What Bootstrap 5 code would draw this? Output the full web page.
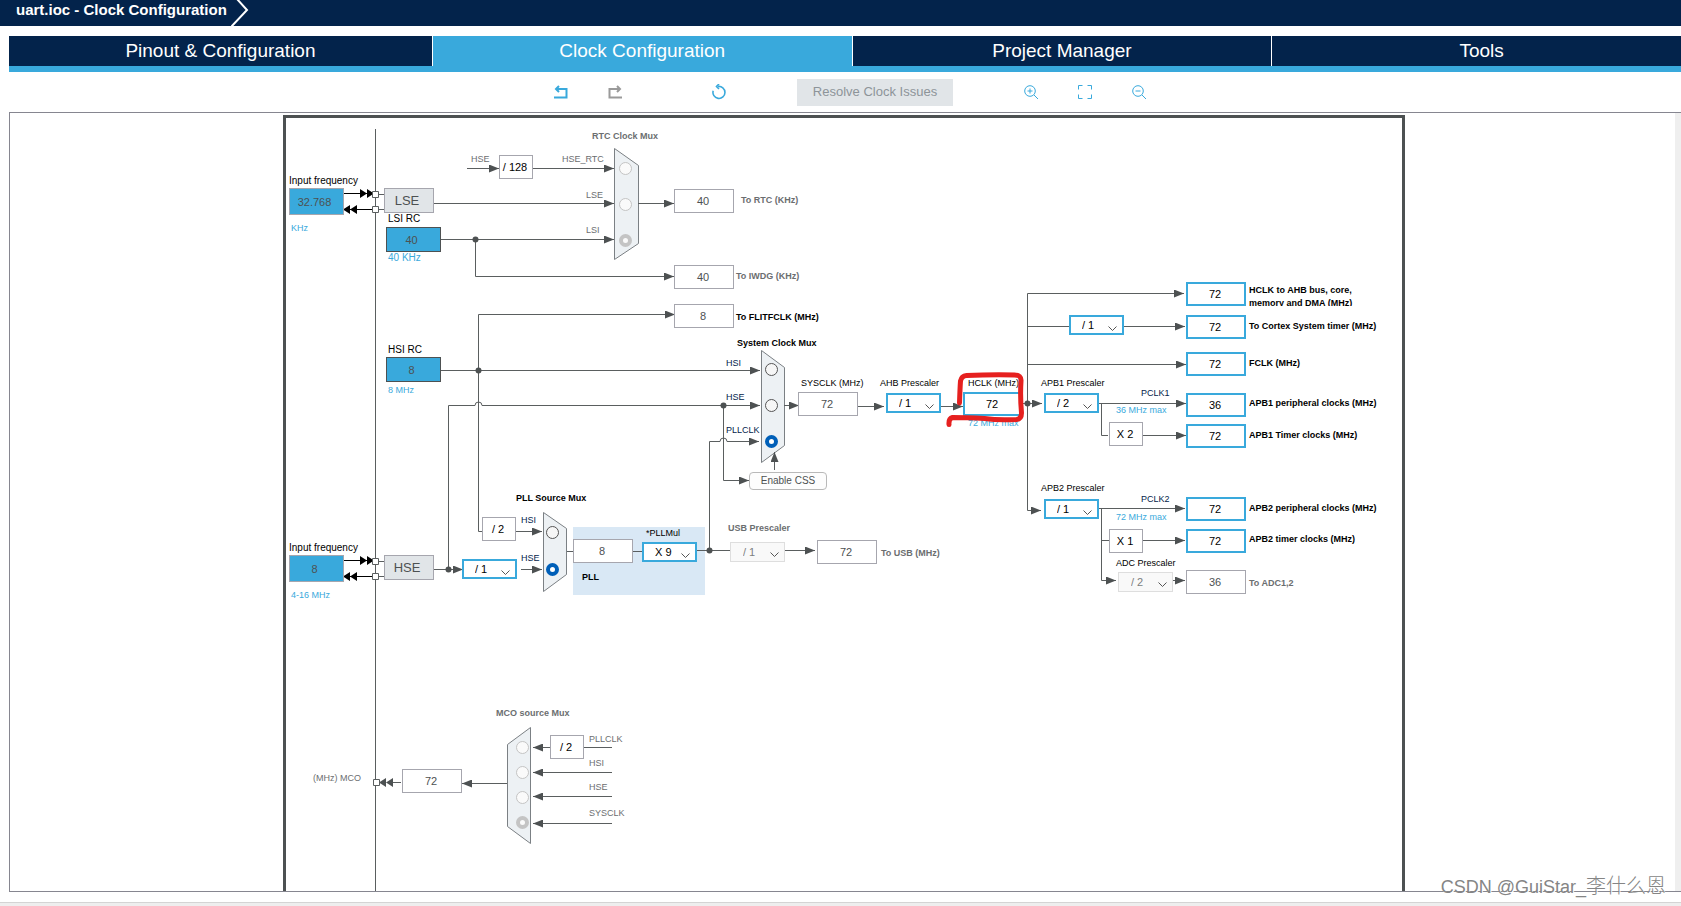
<!DOCTYPE html>
<html lang="en">
<head>
<meta charset="utf-8">
<meta name="viewport" content="width=device-width, initial-scale=1">
<title>uart.ioc - Clock Configuration</title>
<link rel="stylesheet" href="https://cdn.jsdelivr.net/npm/bootstrap@5.3.0/dist/css/bootstrap.min.css">
<style>
:root{--navy:#03234b;--sky:#39a9dc;--wire:#4d5152;--edge:#a6a6ae}
body{font-family:"Liberation Sans",Arial,sans-serif;color:#000;background:#fff;overflow-x:hidden}
.titlebar{background:var(--navy);height:26px}
.titlebar h1{font-size:15px;line-height:20px;font-weight:700}
.tab-row{padding-top:10px}
.main-tabs{margin-left:9px;margin-right:-10px;border-bottom:6px solid var(--sky);gap:1px}
.main-tabs .nav-item{flex:1 1 0}
.main-tabs .nav-item:first-child{flex-grow:1.01}
.main-tabs .nav-link{background:var(--navy);color:#fff;font-size:19px;line-height:30px;padding:0;border-radius:0;text-align:center}
.main-tabs .nav-link.active{background:var(--sky);color:#fff}
.tools{height:40px;padding-left:19px}
.icon-btn{width:14px;height:16px;color:var(--sky);background:none;border:0;padding:0;display:flex;align-items:center}
.icon-btn:disabled{color:#9a9a9a}
.gap-a{margin-right:40px}.gap-b{margin-right:90px}.gap-c{margin-right:71px}
.resolve,.resolve:disabled{background:#e1e5e8;color:#8d9499;border:0;border-radius:0;width:156px;height:27px;padding:0;font-size:13px;opacity:1}
.canvas{margin-left:9px;border:1px solid #868690;border-right:0;padding:2px 0 0 3px}
.scrollstrip{width:6px;background:#efefef;margin-top:-2px}
.stage{width:1122px;min-height:776px;border:3px solid var(--wire);border-bottom:0;flex:none}
.stage svg{position:absolute;left:-3px;top:-3px;overflow:visible;pointer-events:none}
.sheet{position:absolute;left:-3px;top:-3px}
.sheet>*{position:absolute}
.cap{font-size:9px;line-height:12px;white-space:nowrap;color:#000}
.cap.big{font-size:10px}
.cap.strong{font-weight:700}
.cap.dim{color:#6b6e70}
.cap.blue{color:var(--sky)}
.cap.navy{color:#03234b}
.cap.wrap2{line-height:13px;width:125px;height:22px;overflow:hidden;white-space:normal}
.sheet .form-control,.sheet .form-select,.factor{border-radius:0;padding:0;font-size:11px;line-height:12px;min-height:0;box-shadow:none}
.sheet .form-control{width:60px;height:24px;text-align:center;padding-right:2px;border:1px solid var(--edge);color:var(--wire);background:#fff}
.sheet .form-control.hot{border:2px solid var(--sky);color:#000}
.sheet .form-control.source{width:55px;height:25px;padding-right:4px;background:var(--sky);border-color:var(--wire)}
.sheet .form-control.osc{width:55px;height:27px;padding-right:4px;background:var(--sky)}
.sheet .form-select{width:55px;height:20px;border:2px solid var(--sky);color:#000;padding-left:11px;background:#fff url("data:image/svg+xml,%3Csvg xmlns='http://www.w3.org/2000/svg' width='9' height='6'%3E%3Cpath d='M.5.5l4 4 4-4' fill='none' stroke='%23555'/%3E%3C/svg%3E") no-repeat right 5px top 9px/9px 6px}
.sheet .form-select:disabled{border:1px solid #dedede;color:#7c7f80;background-color:#f9f9f9;opacity:1;padding-left:12px}
.factor{width:34px;height:24px;padding-right:2px!important;border:1px solid var(--edge);background:#fff;line-height:22px!important;text-align:center}
.oscbtn{width:50px;height:25px;border:1px solid var(--edge);background:#e1e5e8;color:var(--wire);font-size:13px;line-height:23px;padding:0 4px 0 0;border-radius:0}
.cssbtn{width:78px;height:18px;border:1px solid #b9b9b9;background:#fdfdfd;color:var(--wire);font-size:10px;line-height:16px;padding:0;border-radius:4px}
.sheet .form-check-input{width:13px;height:13px;margin:0;border:1px solid #555;background:#f6f6f6;opacity:1}
.sheet .form-check-input:checked{border:4px solid #005fb8;background:#fff}
.sheet .form-check-input:disabled{border-color:#c4c4c4;background:#fafafa}
.statusbar{height:4px;background:#eee;border-top:1px solid #d4d4d4;margin-top:10px}
.watermark{position:absolute;right:15px;bottom:4px;font:300 18px/30px "Liberation Sans","Noto Sans CJK SC",sans-serif;color:#858585;text-shadow:1px 1px 0 #fff}
.watermark span{font-size:20px}
</style>
</head>
<body class="d-flex flex-column min-vh-100 position-relative">
<header class="titlebar d-flex align-items-start ps-3">
  <h1 class="text-white m-0">uart.ioc - Clock Configuration</h1>
  <svg class="ms-1" width="18" height="26" fill="none" stroke="#fff" stroke-width="2" aria-hidden="true"><path d="M6-1l10 11L0 27"/></svg>
</header>

<div class="tab-row overflow-hidden">
<ul class="nav main-tabs flex-nowrap">
  <li class="nav-item"><a class="nav-link" href="#pinout">Pinout &amp; Configuration</a></li>
  <li class="nav-item"><a class="nav-link active" aria-current="page" href="#clock">Clock Configuration</a></li>
  <li class="nav-item"><a class="nav-link" href="#project">Project Manager</a></li>
  <li class="nav-item"><a class="nav-link" href="#tools">Tools</a></li>
</ul>
</div>

<div class="tools d-flex align-items-center justify-content-center" role="toolbar" aria-label="Clock tools">
  <button class="icon-btn gap-a" aria-label="Undo"><svg width="14" height="14" fill="none" stroke="currentColor" stroke-width="2"><path d="M2 4h10.500v8.500H0"/><path d="M5 1L2 4l3 3"/></svg></button>
  <button class="icon-btn gap-b" aria-label="Redo" disabled><svg width="14" height="14" fill="none" stroke="currentColor" stroke-width="2"><path d="M12 4H1.500v8.500H14"/><path d="M9 1l3 3-3 3"/></svg></button>
  <button class="icon-btn gap-c" aria-label="Reset"><svg width="14" height="16" fill="none" stroke="currentColor" stroke-width="1.600"><path d="M6 2.500a6 6 0 1 1-4.800 4.200"/><path d="M7 0L4.500 2.500 7 5"/></svg></button>
  <button class="btn resolve gap-c" disabled>Resolve Clock Issues</button>
  <button class="icon-btn gap-a" aria-label="Zoom in"><svg width="14" height="14" fill="none" stroke="currentColor"><circle cx="6" cy="6" r="5.300"/><path d="M10 10l4 4M3.500 6h5M6 3.500v5"/></svg></button>
  <button class="icon-btn gap-a" aria-label="Fit"><svg width="14" height="14" fill="none" stroke="currentColor"><path d="M.5 4.500v-4h4M9.500.5h4v4M13.500 9.500v4h-4M4.500 13.500h-4v-4"/></svg></button>
  <button class="icon-btn" aria-label="Zoom out"><svg width="14" height="14" fill="none" stroke="currentColor"><circle cx="6" cy="6" r="5.300"/><path d="M10 10l4 4M3.500 6h5"/></svg></button>
</div>

<main class="canvas d-flex flex-grow-1">
  <div class="d-flex flex-grow-1 justify-content-center">
  <div class="stage position-relative">
    <svg width="1122" height="776" viewBox="283 115 1122 776" fill="none" stroke="#5a5e5f" aria-hidden="true">
      <defs>
        <marker id="tip" markerUnits="userSpaceOnUse" markerWidth="11" markerHeight="8" refX="10" refY="4" orient="auto"><path d="M0 0L10 4 0 8z" fill="#4d5152" stroke="none"/></marker>
      </defs>
      <rect x="573" y="527" width="132" height="68" fill="#d9e8f5" stroke="none"/>
      <path d="M375.500 129V891"/>
      <g fill="#edf1f4" stroke="#7b8084">
        <path d="M614.500 148.500l24 17v78l-24 16z"/>
        <path d="M761.500 350.500l23 17v78l-23 17z"/>
        <path d="M543.500 512.500l23 16v46l-23 17z"/>
        <path d="M507.500 744.500l23-17v116l-23-17z"/>
      </g>
      <!-- external oscillator pins -->
      <g stroke="#000">
        <path d="M344 193.500h28M344 209.500h28M344 560.500h28M344 576.500h28"/>
        <path fill="#000" stroke="none" d="M360 189l7 4.500-7 4.500zM367 189l7 4.500-7 4.500zM350 205l-7 4.500 7 4.500zM357 205l-7 4.500 7 4.500zM360 556l7 4.500-7 4.500zM367 556l7 4.500-7 4.500zM350 572l-7 4.500 7 4.500zM357 572l-7 4.500 7 4.500z"/>
      </g>
      <path d="M378 194.500h6M378 209.500h6M378 561.500h6M378 576.500h6M393 782.500h8"/>
      <path d="M386 778l-7 4.500 7 4.500zM393 778l-7 4.500 7 4.500z" fill="#4d5152" stroke="none"/>
      <path fill="#fff" d="M372.500 191.500h6v6h-6zM372.500 206.500h6v6h-6zM372.500 558.500h6v6h-6zM372.500 573.500h6v6h-6zM373.500 779.500h6v6h-6z"/>
      <!-- wires; all but the plain ones end in an arrow -->
      <g id="wires">
        <path d="M467 168.500H499"/><path d="M533 168.500H614"/><path d="M434 203.500H614"/><path d="M441 239.500H614"/>
        <path d="M638 203.500H674"/><path d="M475.500 239V276.500H674"/><path d="M478.500 371V314.500H675"/>
        <path d="M441 370.500H760"/><path d="M448.500 569V405.500H475a3.500 3.500 0 0 1 7 0H760"/>
        <path d="M478.500 370V531.500H482" class="plain"/><path d="M516 531.500H542"/><path d="M434 569.500H463"/><path d="M521 569.500H542"/>
        <path d="M723.500 405V480.500H749"/><path d="M709.500 550V441.500H720a3.500 3.500 0 0 1 7 0H759"/>
        <path d="M774.500 470V452"/><path d="M784 405.500H799"/><path d="M858 406.500H884"/><path d="M941 406.500H963"/>
        <path d="M1022 403.500H1042"/><path d="M1027.500 403V293.500H1184"/><path d="M1027.500 403V510.500H1041"/>
        <path d="M1027 326.500H1069" class="plain"/><path d="M1124 326.500H1185"/><path d="M1027 364.500H1186"/>
        <path d="M1099 403.500H1186"/><path d="M1101.500 403V435.500H1108" class="plain"/><path d="M1143 435.500H1186"/>
        <path d="M1099 508.500H1185"/><path d="M1101.500 508V580.500H1116"/><path d="M1101 540.500H1109" class="plain"/><path d="M1143 540.500H1185"/><path d="M1173 580.500H1185"/>
        <path d="M567 551.500H573M633 551.500H642M697 550.500H730" class="plain"/><path d="M785 550.500H815"/>
        <path d="M550 747.500H533"/><path d="M584 747.500H612" class="plain"/><path d="M612 772.500H533"/><path d="M612 796.500H533"/><path d="M612 823.500H533"/><path d="M507 783.500H462"/>
      </g>
      <g fill="#4d5152" stroke="none"><circle cx="475.500" cy="239.500" r="3"/><circle cx="478.500" cy="370.500" r="3"/><circle cx="448.500" cy="569.500" r="3"/><circle cx="723.500" cy="405.500" r="3"/><circle cx="709.500" cy="550.500" r="3"/><circle cx="1027.500" cy="403.500" r="3"/></g>
    </svg>
    <div class="sheet" id="sheet"></div>
    <!-- hand-drawn highlight round HCLK -->
    <svg width="1122" height="776" viewBox="283 115 1122 776" fill="none" stroke="#e6201f" stroke-width="5" stroke-linecap="round" stroke-linejoin="round" aria-hidden="true">
      <path d="M959.500 403q.5-15 1-22 1-5 6-5.500 25-1 48-.5 7 0 6.500 6-1 15 .5 32 0 6-5 6.500-18 1-32-1-18-1-32-1-4 1-3.500 7"/>
    </svg>
  </div>
  </div>
  <div class="scrollstrip"></div>
</main>
<footer class="statusbar"></footer>
<div class="watermark">CSDN @GuiStar_<span lang="zh">李什么恩</span></div>

<script src="https://cdn.jsdelivr.net/npm/bootstrap@5.3.0/dist/js/bootstrap.bundle.min.js"></script>
<script>
const origin = {x: 283, y: 115};
const sheet = document.getElementById('sheet');
function put(el, x, y) {
  el.style.left = (x - origin.x) + 'px';
  el.style.top = (y - origin.y) + 'px';
  sheet.append(el);
  return el;
}
function make(tag, cls, props) {
  return Object.assign(document.createElement(tag), {className: cls}, props);
}

// captions: left edge, middle, text, look, control it names
[
  [289,181,'Input frequency','big','lseFreq'],[291,228,'KHz','blue'],[388,219,'LSI RC','big','lsi'],[388,258,'40 KHz','blue big'],
  [388,350,'HSI RC','big','hsi'],[388,390,'8 MHz','blue'],[471,159,'HSE','dim'],[562,159,'HSE_RTC','dim','rtc0'],
  [586,195,'LSE','dim','rtc1'],[586,230,'LSI','dim','rtc2'],[592,136,'RTC Clock Mux','dim strong'],
  [741,200,'To RTC (KHz)','dim strong','rtc'],[736,276,'To IWDG (KHz)','dim strong','iwdg'],[736,317,'To FLITFCLK (MHz)','strong','flitf'],
  [737,343,'System Clock Mux','strong'],[726,363,'HSI','navy','sys0'],[726,397,'HSE','navy','sys1'],[726,430,'PLLCLK','navy','sys2'],
  [801,383,'SYSCLK (MHz)','','sysclk'],[880,383,'AHB Prescaler','','ahb'],[968,383,'HCLK (MHz)','','hclk'],[968,423,'72 MHz max','blue'],
  [1041,383,'APB1 Prescaler','','apb1'],[1141,393,'PCLK1','navy'],[1116,410,'36 MHz max','blue'],
  [1041,488,'APB2 Prescaler','','apb2'],[1141,499,'PCLK2','navy'],[1116,517,'72 MHz max','blue'],[1116,563,'ADC Prescaler','','adcdiv'],
  [1249,290,'HCLK to AHB bus, core, memory and DMA (MHz)','strong wrap2','ahbbus'],[1249,326,'To Cortex System timer (MHz)','strong','cortex'],
  [1249,363,'FCLK (MHz)','strong','fclk'],[1249,403,'APB1 peripheral clocks (MHz)','strong','p1'],[1249,435,'APB1 Timer clocks (MHz)','strong','t1'],
  [1249,508,'APB2 peripheral clocks (MHz)','strong','p2'],[1249,539,'APB2 timer clocks (MHz)','strong','t2'],[1249,583,'To ADC1,2','dim strong','adc'],
  [516,498,'PLL Source Mux','strong'],[521,520,'HSI','navy','pll0'],[521,558,'HSE','navy','pll1'],[646,533,'*PLLMul','','pllmul'],[582,577,'PLL','strong','pll'],
  [728,528,'USB Prescaler','dim strong','usbdiv'],[881,553,'To USB (MHz)','dim strong','usb'],
  [289,548,'Input frequency','big','hseFreq'],[291,595,'4-16 MHz','blue'],
  [313,778,'(MHz) MCO','dim','mco'],[496,713,'MCO source Mux','dim strong'],
  [589,739,'PLLCLK','dim','mco0'],[589,763,'HSI','dim','mco1'],[589,787,'HSE','dim','mco2'],[589,813,'SYSCLK','dim','mco3']
].forEach(([x, y, text, look, target]) => {
  const el = make(target ? 'label' : 'div', 'cap ' + look, {textContent: text});
  if (target) el.htmlFor = target;
  put(el, x, y - 6);
});

// frequency boxes: left, top, value, look, id
[
  [289,188,'32.768','osc','lseFreq'],[289,555,'8','osc','hseFreq'],[386,227,'40','source','lsi'],[386,357,'8','source','hsi'],
  [674,189,'40','','rtc'],[674,265,'40','','iwdg'],[674,304,'8','','flitf'],[798,392,'72','','sysclk'],[963,392,'72','hot','hclk'],
  [573,539,'8','','pll'],[817,540,'72','','usb'],[402,769,'72','','mco'],
  [1186,282,'72','hot','ahbbus'],[1186,315,'72','hot','cortex'],[1186,352,'72','hot','fclk'],[1186,393,'36','hot','p1'],[1186,424,'72','hot','t1'],
  [1186,497,'72','hot','p2'],[1186,529,'72','hot','t2'],[1186,570,'36','','adc']
].forEach(([x, y, value, look, id]) => put(make('input', 'form-control ' + look, {type: 'text', value, id}), x, y));

// prescalers: left, top, value, id, disabled
[
  [886,393,'/ 1','ahb'],[1069,315,'/ 1','systick'],[1044,393,'/ 2','apb1'],[1044,499,'/ 1','apb2'],[1118,572,'/ 2','adcdiv',true],
  [642,542,'X 9','pllmul'],[462,559,'/ 1','hsediv'],[730,542,'/ 1','usbdiv',true]
].forEach(([x, y, value, id, disabled = false]) => {
  const el = make('select', 'form-select', {id, disabled});
  el.add(new Option(value));
  if (id === 'systick' || id === 'hsediv') el.setAttribute('aria-label', id === 'systick' ? 'Cortex prescaler' : 'HSE divider');
  put(el, x, y);
});

// fixed factors
[[499,155,'/ 128'],[482,517,'/ 2'],[550,735,'/ 2'],[1109,422,'X 2'],[1109,529,'X 1']]
  .forEach(([x, y, text]) => put(make('div', 'factor', {textContent: text}), x, y));

// mux inputs: name, centre x, centres y, chosen, disabled
[
  ['rtc',625,[168,204,240],2,true],['sys',771,[369,405,441],2,false],['pll',552,[532,569],1,false],['mco',522,[747,772,797,822],3,true]
].forEach(([name, x, ys, chosen, disabled]) => ys.forEach((y, i) =>
  put(make('input', 'form-check-input', {type: 'radio', name: name + 'Mux', id: name + i, checked: i === chosen, disabled}), x - 6, y - 6)));

put(make('button', 'btn oscbtn', {type: 'button', textContent: 'LSE'}), 384, 188);
put(make('button', 'btn oscbtn', {type: 'button', textContent: 'HSE'}), 384, 555);
put(make('button', 'btn cssbtn', {type: 'button', textContent: 'Enable CSS'}), 749, 472);

document.querySelectorAll('#wires path:not(.plain)').forEach(p => p.setAttribute('marker-end', 'url(#tip)'));
</script>
</body>
</html>
